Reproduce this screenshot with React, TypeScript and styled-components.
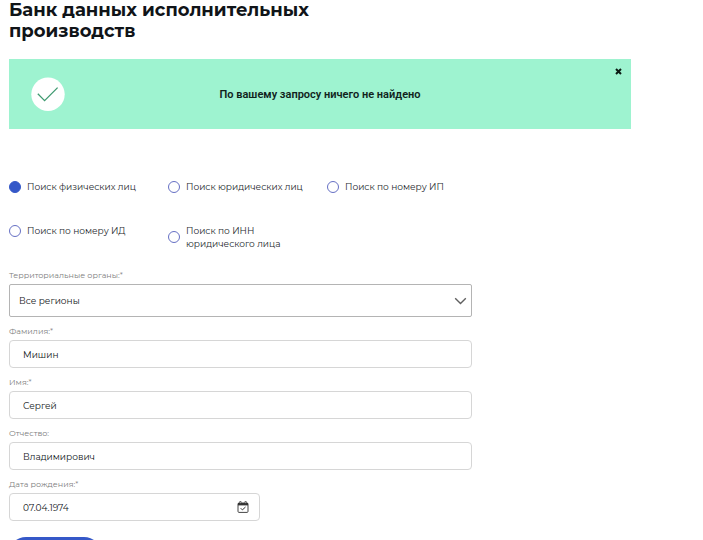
import React, { useState } from "react";
import styled, { createGlobalStyle } from "styled-components";

const GlobalStyle = createGlobalStyle`
  *, *::before, *::after { box-sizing: border-box; }
  body {
    margin: 0;
    background: #fff;
    color: #1c2024;
    font-family: Montserrat, Inter, "Open Sans", sans-serif;
    font-size: 9px;
    line-height: 13px;
  }
  input, select, button { font: inherit; color: inherit; }
`;

const Page = styled.main`
  padding: 0 72px 24px 9px;
`;

const Title = styled.h1`
  max-width: 340px;
  margin: 0;
  font-size: 18px;
  line-height: 21px;
  font-weight: 700;
  color: #101418;
`;

const Notice = styled.div`
  position: relative;
  display: grid;
  grid-template-columns: 34px 1fr 34px;
  align-items: center;
  min-height: 70px;
  margin-top: 17px;
  padding: 0 22px;
  background: #9ef3d0;
`;

const NoticeText = styled.p`
  margin: 0;
  text-align: center;
  font-family: Roboto, "Liberation Sans", sans-serif;
  font-size: 11px;
  line-height: 13px;
  font-weight: 600;
  color: #10231c;
`;

const CloseButton = styled.button`
  position: absolute;
  top: 9px;
  right: 9px;
  display: flex;
  padding: 0;
  border: 0;
  background: none;
  cursor: pointer;
`;

const Form = styled.form`
  max-width: 463px;
  margin-top: 51px;
`;

const SearchKinds = styled.fieldset`
  display: grid;
  grid-template-columns: repeat(3, 1fr);
  column-gap: 14px;
  row-gap: 31px;
  align-items: start;
  margin: 0;
  padding: 0;
  border: 0;
`;

const Choice = styled.label`
  display: flex;
  align-items: center;
  gap: 6px;
  max-width: 144px;
  color: #24282c;
  cursor: pointer;
`;

const Radio = styled.input`
  flex: none;
  appearance: none;
  width: 12px;
  height: 12px;
  margin: 0;
  border: 1px solid #6670c4;
  border-radius: 50%;
  background: #fff;

  &:checked {
    border-color: #3558c8;
    background: #3558c8;
  }
`;

const Fields = styled.div`
  display: grid;
  gap: 8px;
  margin-top: 19px;
`;

const Field = styled.div<{ $narrow?: boolean }>`
  display: grid;
  gap: 2px;
  max-width: ${({ $narrow }) => ($narrow ? "251px" : "none")};
`;

const FieldLabel = styled.label`
  font-size: 8px;
  line-height: 13px;
  color: #808080;
`;

const Control = styled.div`
  position: relative;
  display: grid;
  align-items: center;
`;

const Select = styled.select`
  appearance: none;
  width: 100%;
  height: 33px;
  padding: 0 32px 0 9px;
  border: 1px solid #b4b4b4;
  border-radius: 2px;
  background: #fff;
  color: #101418;
`;

const TextInput = styled.input`
  width: 100%;
  height: 28px;
  padding: 0 14px 0 13px;
  border: 1px solid #d6d6d6;
  border-radius: 4px;
  background: #fff;
  color: #101418;
`;

const ControlIcon = styled.svg`
  position: absolute;
  pointer-events: none;
`;

const SelectIcon = styled(ControlIcon)`
  right: 5px;
`;

const DateIcon = styled(ControlIcon)`
  right: 11px;
`;

const SubmitButton = styled.button`
  width: 92px;
  height: 34px;
  margin-top: 16px;
  border: 0;
  border-radius: 17px;
  background: #3558c8;
  color: #fff;
  cursor: pointer;
`;

const searchKinds = [
  "Поиск физических лиц",
  "Поиск юридических лиц",
  "Поиск по номеру ИП",
  "Поиск по номеру ИД",
  "Поиск по ИНН юридического лица",
];

const nameFields = [
  { id: "surname", label: "Фамилия:*", value: "Мишин" },
  { id: "name", label: "Имя:*", value: "Сергей" },
  { id: "patronymic", label: "Отчество:", value: "Владимирович" },
];

export default function App() {
  const [kind, setKind] = useState(searchKinds[0]);
  const [noticeOpen, setNoticeOpen] = useState(true);

  return (
    <>
      <GlobalStyle />
      <Page>
        <Title>Банк данных исполнительных производств</Title>

        {noticeOpen && (
          <Notice role="status">
            <svg width="34" height="34" viewBox="0 0 34 34" aria-hidden="true">
              <circle cx="17" cy="17.3" r="16.7" fill="#fff" />
              <path d="M6.8 16.8 13.6 23.6 26.6 10.6" fill="none" stroke="#3f9a70" strokeWidth="1.3" />
            </svg>
            <NoticeText>По вашему запросу ничего не найдено</NoticeText>
            <CloseButton type="button" aria-label="Закрыть" onClick={() => setNoticeOpen(false)}>
              <svg width="7" height="7" viewBox="0 0 7 7" aria-hidden="true">
                <path d="M1 1 6 6M6 1 1 6" stroke="#0c1a14" strokeWidth="2" />
              </svg>
            </CloseButton>
          </Notice>
        )}

        <Form onSubmit={(e) => e.preventDefault()}>
          <SearchKinds>
            {searchKinds.map((k) => (
              <Choice key={k}>
                <Radio type="radio" name="kind" checked={kind === k} onChange={() => setKind(k)} />
                <span>{k}</span>
              </Choice>
            ))}
          </SearchKinds>

          <Fields>
            <Field>
              <FieldLabel htmlFor="region">Территориальные органы:*</FieldLabel>
              <Control>
                <Select id="region">
                  <option>Все регионы</option>
                </Select>
                <SelectIcon width="13" height="8" viewBox="0 0 13 8" aria-hidden="true">
                  <path d="M1.2 1.2 6.5 6.4 11.8 1.2" fill="none" stroke="#606060" strokeWidth="1.4" />
                </SelectIcon>
              </Control>
            </Field>

            {nameFields.map((f) => (
              <Field key={f.id}>
                <FieldLabel htmlFor={f.id}>{f.label}</FieldLabel>
                <TextInput id={f.id} type="text" defaultValue={f.value} />
              </Field>
            ))}

            <Field $narrow>
              <FieldLabel htmlFor="birth">Дата рождения:*</FieldLabel>
              <Control>
                <TextInput id="birth" type="text" defaultValue="07.04.1974" />
                <DateIcon width="12" height="12" viewBox="0 0 12 12" aria-hidden="true">
                  <rect x="1" y="2" width="10" height="9.4" rx="1" fill="none" stroke="#454545" />
                  <path d="M1 2h10v2.4H1z" fill="#333" />
                  <path d="M3.4.3v2.4M8.6.3v2.4" stroke="#333" strokeWidth="1.8" />
                  <path d="M3.4.9v1.3M8.6.9v1.3" stroke="#fff" strokeWidth=".6" />
                  <path d="M3.7 7.2 5.4 8.9 8.5 6" fill="none" stroke="#333" />
                </DateIcon>
              </Control>
            </Field>
          </Fields>

          <SubmitButton type="submit">Найти</SubmitButton>
        </Form>
      </Page>
    </>
  );
}
